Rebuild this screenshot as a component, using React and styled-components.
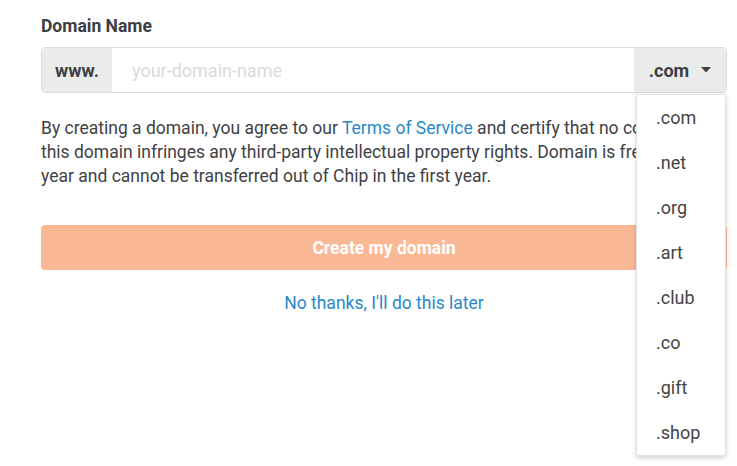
import React, { useState } from 'react';
import styled, { createGlobalStyle } from 'styled-components';

const GlobalStyle = createGlobalStyle`
  html, body {
    margin: 0;
    background: #fff;
    font-family: Roboto, "Liberation Sans", sans-serif;
  }
`;

const Page = styled.div`
  width: 727px;
  min-height: 466px;
  box-sizing: border-box;
  padding: 15px 0 0 41px;
`;

const Label = styled.label`
  display: block;
  font-size: 17.5px;
  font-weight: 700;
  color: #3b3e42;
  line-height: 22px;
  margin-bottom: 10px;
`;

const InputGroup = styled.div`
  position: relative;
  display: flex;
  height: 46px;
  border: 1px solid #dcdcdc;
  border-radius: 4px;
  box-sizing: border-box;
`;

const Addon = styled.div`
  display: flex;
  align-items: center;
  justify-content: center;
  gap: ${(p) => p.gap || 0}px;
  width: ${(p) => p.width}px;
  background: #ebebeb;
  font-size: 18px;
  font-weight: 700;
  color: #3b3e42;
  border-radius: ${(p) => (p.side === 'left' ? '4px 0 0 4px' : '0 4px 4px 0')};
  cursor: ${(p) => (p.side === 'right' ? 'pointer' : 'default')};
`;

const Input = styled.input`
  flex: 1;
  min-width: 0;
  border: none;
  outline: none;
  padding: 0 20px;
  font-family: inherit;
  font-size: 18px;
  color: #333;
  &::placeholder {
    color: #d7dade;
  }
`;

const Menu = styled.ul`
  position: absolute;
  top: 46px;
  right: 0;
  width: 90px;
  box-sizing: border-box;
  margin: 0;
  padding: 0;
  list-style: none;
  background: #fff;
  border: 1px solid #e3e3e3;
  border-radius: 0 0 3px 3px;
  box-shadow: 0 2px 5px rgba(0, 0, 0, 0.18);
  z-index: 10;
`;

const MenuItem = styled.li`
  height: 45px;
  line-height: 45px;
  padding-left: 19px;
  font-size: 18px;
  color: #444;
  cursor: pointer;
`;

const Terms = styled.p`
  margin: 23px 0 0;
  font-size: 17.5px;
  line-height: 24px;
  color: #3f4245;
`;

const Link = styled.a`
  color: #2a88c6;
  text-decoration: none;
`;

const SubmitButton = styled.button`
  display: block;
  width: 100%;
  height: 45px;
  margin-top: 37px;
  border: none;
  border-radius: 4px;
  background: #fbb894;
  color: #fff;
  font-family: inherit;
  font-size: 17.5px;
  font-weight: 700;
`;

const Later = styled.div`
  margin-top: 21px;
  text-align: center;
  font-size: 17.5px;
  line-height: 24px;
`;

const tlds = ['.com', '.net', '.org', '.art', '.club', '.co', '.gift', '.shop'];

const Caret = () => (
  <svg width="10" height="6" viewBox="0 0 10 6">
    <path d="M0 0h10L5 5.5z" fill="#3b3e42" />
  </svg>
);

const App = () => {
  const [tld, setTld] = useState('.com');
  const [open, setOpen] = useState(true);

  return (
    <Page>
      <GlobalStyle />
      <Label>Domain Name</Label>
      <InputGroup>
        <Addon side="left" width={70}>www.</Addon>
        <Input placeholder="your-domain-name" />
        <Addon side="right" width={92} gap={12} onClick={() => setOpen(!open)}>
          {tld}
          <Caret />
        </Addon>
        {open ? (
          <Menu>
            {tlds.map((t) => (
              <MenuItem key={t} onClick={() => { setTld(t); setOpen(false); }}>
                {t}
              </MenuItem>
            ))}
          </Menu>
        ) : null}
      </InputGroup>
      <Terms>
        By creating a domain, you agree to our <Link href="#">Terms of Service</Link> and certify that no content in
        this domain infringes any third-party intellectual property rights. Domain is free for one
        year and cannot be transferred out of Chip in the first year.
      </Terms>
      <SubmitButton disabled>Create my domain</SubmitButton>
      <Later>
        <Link href="#">No thanks, I'll do this later</Link>
      </Later>
    </Page>
  );
};

export default App;
